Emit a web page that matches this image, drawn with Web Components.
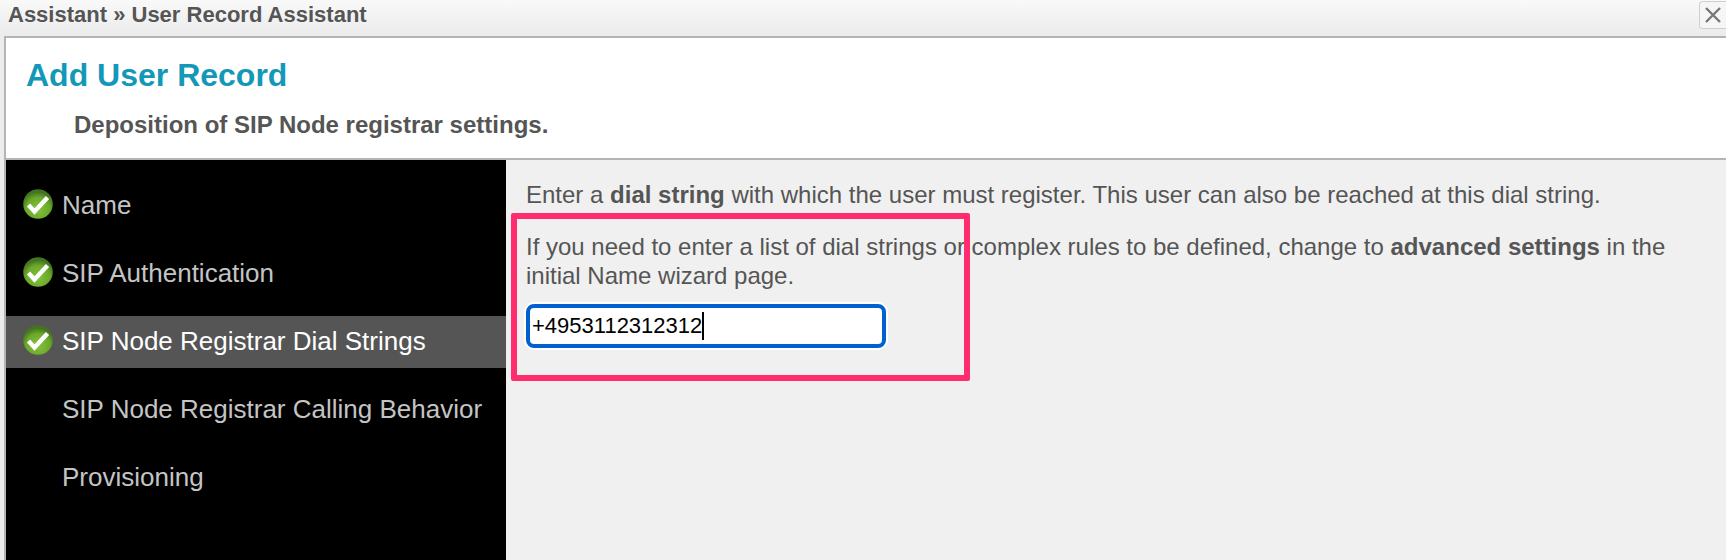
<!DOCTYPE html>
<html>
<head>
<meta charset="utf-8">
<style>
  html, body { margin: 0; height: 100%; overflow: hidden; background: #ececec; }
  body { font-family: "Liberation Sans", Arial, sans-serif; color: #555; }
</style>
</head>
<body>
<user-wizard>
  <wizard-titlebar slot="top">Assistant » User Record Assistant</wizard-titlebar>
  <wizard-header slot="header" title-text="Add User Record">Deposition of SIP Node registrar settings.</wizard-header>
  <wizard-nav slot="nav">
    <nav-item done>Name</nav-item>
    <nav-item done>SIP Authentication</nav-item>
    <nav-item done active>SIP Node Registrar Dial Strings</nav-item>
    <nav-item>SIP Node Registrar Calling Behavior</nav-item>
    <nav-item>Provisioning</nav-item>
  </wizard-nav>
  <wizard-page slot="page">
    <p>Enter a <b>dial string</b> with which the user must register. This user can also be reached at this dial string.</p>
    <p>If you need to enter a list of dial strings or complex rules to be defined, change to <b>advanced settings</b> in the initial Name wizard page.</p>
    <dial-input>+4953112312312</dial-input>
  </wizard-page>
</user-wizard>
<script>
  class UserWizard extends HTMLElement {
    constructor() {
      super();
      this.attachShadow({ mode: "open" });
    }
    connectedCallback() {
      this.shadowRoot.innerHTML = `
        <style>
          :host { display: flex; flex-direction: column; height: 560px; position: relative; overflow: hidden; }
          .frame { flex: 1; display: flex; flex-direction: column; margin-left: 4px; border-left: 2px solid #b4b4b4; border-top: 2px solid #b4b4b4; min-height: 0; }
          .content { flex: 1; display: flex; min-height: 0; background: #f0f0f0; }
          /* marca de anotacion encima del contenido */
          .mark { position: absolute; left: 511px; top: 213px; width: 459px; height: 168px; box-sizing: border-box; border: 6px solid #ff2d6e; border-radius: 2px; pointer-events: none; }
        </style>
        <slot name="top"></slot>
        <div class="frame">
          <slot name="header"></slot>
          <div class="content">
            <slot name="nav"></slot>
            <slot name="page"></slot>
          </div>
        </div>
        <div class="mark"></div>
      `;
    }
  }
  window.customElements.define("user-wizard", UserWizard);

  class WizardTitlebar extends HTMLElement {
    constructor() {
      super();
      this.attachShadow({ mode: "open" });
    }
    connectedCallback() {
      this.shadowRoot.innerHTML = `
        <style>
          :host { display: flex; align-items: flex-start; justify-content: space-between; height: 36px; box-sizing: border-box; padding: 0 0 0 8px; background: linear-gradient(#f9f9f9, #ebebeb); color: #555; font-size: 22px; font-weight: bold; line-height: 29px; }
          button { width: 27px; height: 28px; margin-top: 1px; padding: 0; box-sizing: border-box; border: 1px solid #cfcfcf; border-right: none; border-radius: 4px 0 0 4px; background: #f6f6f6; display: flex; align-items: center; justify-content: center; }
        </style>
        <span><slot></slot></span>
        <button aria-label="Close"><svg width="20" height="20" viewBox="0 0 20 20"><path d="M3 3 L17 17 M17 3 L3 17" stroke="#777" stroke-width="2.4" fill="none"/></svg></button>
      `;
    }
  }
  window.customElements.define("wizard-titlebar", WizardTitlebar);

  class WizardHeader extends HTMLElement {
    constructor() {
      super();
      this.attachShadow({ mode: "open" });
    }
    connectedCallback() {
      this.shadowRoot.innerHTML = `
        <style>
          :host { display: block; height: 122px; box-sizing: border-box; background: #fff; border-bottom: 2px solid #b4b4b4; padding: 17px 0 0 20px; }
          h1 { margin: 0; font-size: 32px; line-height: 40px; font-weight: bold; color: #1398b8; }
          p { margin: 15px 0 0 48px; font-size: 24px; line-height: 30px; font-weight: bold; color: #555; }
        </style>
        <h1>${this.getAttribute("title-text")}</h1>
        <p><slot></slot></p>
      `;
    }
  }
  window.customElements.define("wizard-header", WizardHeader);

  class WizardNav extends HTMLElement {
    constructor() {
      super();
      this.attachShadow({ mode: "open" });
    }
    connectedCallback() {
      this.shadowRoot.innerHTML = `
        <style>
          :host { display: flex; flex-direction: column; gap: 16px; width: 500px; flex: none; box-sizing: border-box; padding-top: 20px; background: #000; }
        </style>
        <slot></slot>
      `;
    }
  }
  window.customElements.define("wizard-nav", WizardNav);

  class NavItem extends HTMLElement {
    constructor() {
      super();
      this.attachShadow({ mode: "open" });
    }
    connectedCallback() {
      const icon = this.hasAttribute("done") ? `
        <svg class="check" width="34" height="34" viewBox="0 0 34 34">
          <defs>
            <radialGradient id="g" cx="50%" cy="68%" r="58%">
              <stop offset="0" stop-color="#86c23a"/>
              <stop offset="0.7" stop-color="#6aa82a"/>
              <stop offset="1" stop-color="#447420"/>
            </radialGradient>
          </defs>
          <circle cx="17" cy="17" r="14.8" fill="url(#g)"/>
          <path d="M7.5 18 L13.5 24.5 L26.5 10.5" stroke="#fff" stroke-width="4.4" fill="none" style="filter: blur(0.5px)"/>
        </svg>` : "";
      this.shadowRoot.innerHTML = `
        <style>
          :host { display: block; position: relative; height: 52px; box-sizing: border-box; padding-left: 56px; font-size: 26px; line-height: 50px; color: #c4c4c4; white-space: nowrap; }
          :host([active]) { background: #555; color: #fff; }
          .check { position: absolute; left: 15px; top: 7px; }
        </style>
        ${icon}<slot></slot>
      `;
    }
  }
  window.customElements.define("nav-item", NavItem);

  class WizardPage extends HTMLElement {
    constructor() {
      super();
      this.attachShadow({ mode: "open" });
    }
    connectedCallback() {
      this.shadowRoot.innerHTML = `
        <style>
          :host { display: block; flex: 1; min-width: 0; box-sizing: border-box; padding: 19.5px 60px 0 20px; font-size: 24px; line-height: 29px; color: #555; }
          ::slotted(p) { margin: 0 0 23px; }
          ::slotted(p:last-of-type) { margin-bottom: 14px; }
        </style>
        <slot></slot>
      `;
    }
  }
  window.customElements.define("wizard-page", WizardPage);

  class DialInput extends HTMLElement {
    constructor() {
      super();
      this.attachShadow({ mode: "open" });
    }
    connectedCallback() {
      this.shadowRoot.innerHTML = `
        <style>
          :host { display: block; width: 360px; height: 44px; box-sizing: border-box; padding-left: 2px; background: #fff; border: 4px solid #0060d0; border-radius: 8px; box-shadow: 0 0 0 2px #fff; color: #000; font-size: 22px; line-height: 35px; white-space: nowrap; }
          .caret { display: inline-block; width: 2px; height: 28px; background: #000; vertical-align: -7px; }
        </style>
        <slot></slot><span class="caret"></span>
      `;
    }
  }
  window.customElements.define("dial-input", DialInput);
</script>
</body>
</html>
